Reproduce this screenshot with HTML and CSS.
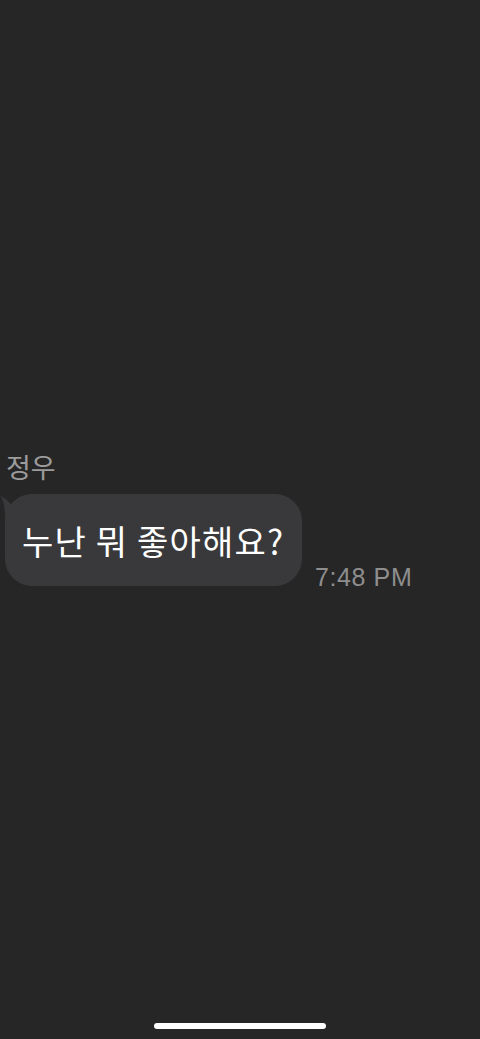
FILE: index.html
```html
<!DOCTYPE html>
<html>
<head>
    <title>정우</title>
    <link rel="stylesheet" href="styles.css">
</head>
<body>
    <div class="chat">
        <div class="sender">정우</div>
        <div class="row">
            <div class="bubble">
                <svg class="tail" width="22" height="22" viewBox="0 0 22 22">
                    <path d="M0 0 C6 2 10 7 13 11 C15 7 18 5 22 4 L22 22 L5 22 C5 13 4 4 0 0 Z" fill="#39393b"/>
                </svg>
                <span class="text">누난 뭐 좋아해요?</span>
            </div>
            <div class="time">7:48 PM</div>
        </div>
    </div>
    <div class="home-bar"></div>
</body>
</html>
```

FILE: styles.css
```css
html, body {
    height: 100%;
}

body {
    margin: 0;
    background-color: #262626; /* dark chat background */
    font-family: "Noto Sans CJK KR", "Noto Sans", sans-serif;
    display: flex;
    flex-direction: column;
    overflow: hidden;
}

.chat {
    padding-top: 449px;
    padding-left: 5px;
    flex: 1;
}

.sender {
    color: #9c9c9c;
    font-size: 27px;
    line-height: 36px;
    padding-left: 1px;
    margin-bottom: 9px;
}

.row {
    display: flex;
    align-items: flex-end;
}

.bubble {
    position: relative;
    background-color: #39393b;
    border-radius: 27px;
    height: 92px;
    width: 297px;
    box-sizing: border-box;
    padding-left: 17px;
    display: flex;
    align-items: center;
}

.tail {
    position: absolute;
    left: -5px;
    top: 2px;
}

.text {
    color: #ffffff;
    font-size: 34px;
    letter-spacing: 1.2px;
    position: relative;
}

.time {
    color: #8e8e8e;
    font-family: "Liberation Sans", Arial, sans-serif;
    font-size: 25px;
    margin-left: 13px;
    margin-bottom: -6px;
    letter-spacing: 0.6px;
}

.home-bar {
    width: 172px;
    height: 6px;
    border-radius: 3px;
    background-color: #ffffff;
    margin: 0 auto 10px;
}
```
